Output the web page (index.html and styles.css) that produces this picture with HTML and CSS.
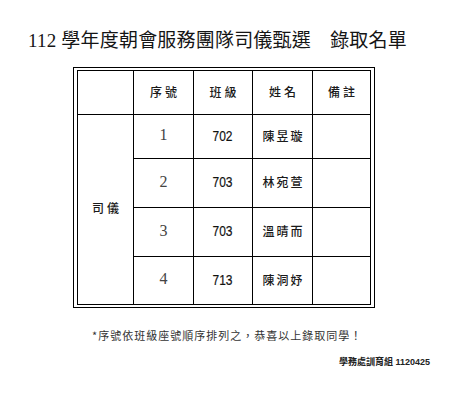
FILE: index.html
```html
<!DOCTYPE html>
<html lang="zh-Hant">
<head>
<meta charset="utf-8">
<link rel="stylesheet" href="styles.css">
</head>
<body>
<h1 class="title">112 學年度朝會服務團隊司儀甄選　錄取名單</h1>
<div class="frame">
  <div class="grid">
    <div class="cell head"></div>
    <div class="cell head">序號</div>
    <div class="cell head">班級</div>
    <div class="cell head">姓名</div>
    <div class="cell head">備註</div>
    <div class="cell role">司儀</div>
    <div class="cell num">1</div>
    <div class="cell cls"><span class="narrow">702</span></div>
    <div class="cell name">陳昱璇</div>
    <div class="cell"></div>
    <div class="cell num">2</div>
    <div class="cell cls"><span class="narrow">703</span></div>
    <div class="cell name">林宛萱</div>
    <div class="cell"></div>
    <div class="cell num">3</div>
    <div class="cell cls"><span class="narrow">703</span></div>
    <div class="cell name">溫晴而</div>
    <div class="cell"></div>
    <div class="cell num">4</div>
    <div class="cell cls"><span class="narrow">713</span></div>
    <div class="cell name">陳洞妤</div>
    <div class="cell"></div>
  </div>
</div>
<p class="note">*序號依班級座號順序排列之，恭喜以上錄取同學！</p>
<p class="sign">學務處訓育組 1120425</p>
</body>
</html>
```

FILE: styles.css
```css
html, body {
  background: #fff;
}
body {
  margin: 8px;
  color: #111;
  font-family: "Liberation Serif", "Noto Sans CJK TC", serif;
}
.title {
  margin: 21px 0 0 20px;
  font-size: 19px;
  line-height: 24px;
  font-weight: normal;
  letter-spacing: 0.2px;
  white-space: nowrap;
  color: #151515;
}
.frame {
  margin: 14px 0 0 65px;
  width: 294px;
  border: 1px solid #000;
  padding: 2px 3px;
}
.grid {
  display: grid;
  grid-template-columns: 55px 59px 58px 59px 57px;
  grid-template-rows: 43px 43px 48px 48px 47px;
  gap: 1px;
  padding: 1px;
  background: #000;
}
.cell {
  background: #fff;
  display: flex;
  align-items: center;
  justify-content: center;
}
.head, .role, .name {
  font-family: "Noto Sans CJK TC", sans-serif;
  font-size: 12px;
  font-weight: 500;
  color: #1a1a1a;
}
.head {
  letter-spacing: 3px;
  padding-left: 3px;
  padding-bottom: 3px;
}
.role {
  grid-row: 2 / span 4;
  letter-spacing: 3px;
  padding-left: 3px;
  padding-bottom: 5px;
}
.name {
  letter-spacing: 2px;
  padding-left: 2px;
  padding-bottom: 3px;
}
.num {
  font-family: "Liberation Serif", serif;
  font-size: 16px;
  color: #444;
  padding-bottom: 3px;
}
.cls {
  font-family: "Liberation Sans", sans-serif;
  font-size: 15px;
  color: #111;
  padding-bottom: 3px;
}
.narrow {
  display: inline-block;
  transform: scaleX(0.8);
  -webkit-text-stroke: 0.2px #111;
}
.note {
  margin: 20px 0 0 84px;
  font-family: "Noto Sans CJK TC", sans-serif;
  font-size: 11px;
  line-height: 14px;
  letter-spacing: 1px;
  color: #333;
}
.sign {
  margin: 14px 0 0 0;
  padding-right: 29px;
  text-align: right;
  font-family: "Liberation Sans", "Noto Sans CJK TC", sans-serif;
  font-size: 9px;
  line-height: 12px;
  font-weight: 700;
  color: #222;
}
```
